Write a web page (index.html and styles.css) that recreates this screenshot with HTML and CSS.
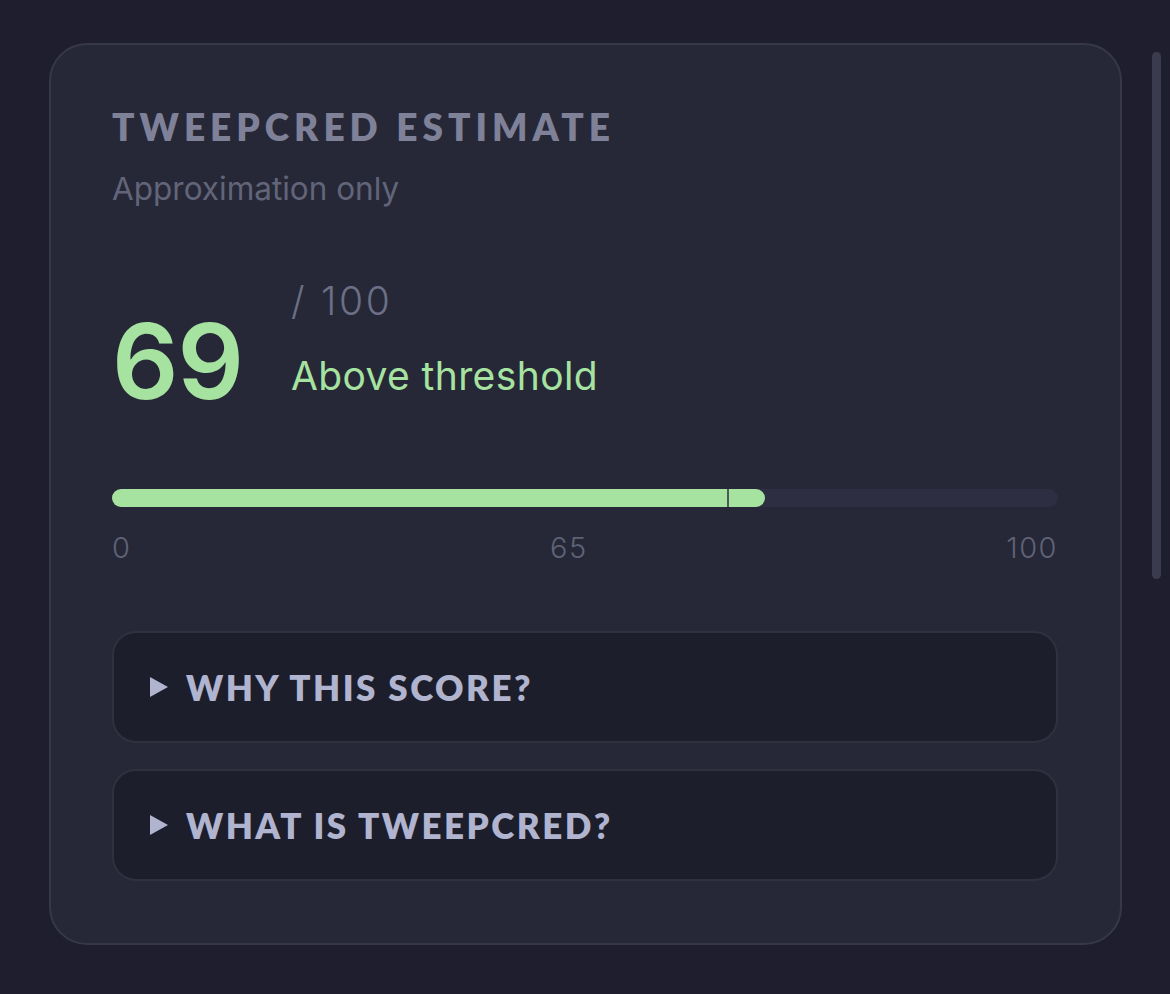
FILE: index.html
```html
<!DOCTYPE html>
<html>
<head>
<meta charset="utf-8">
<link rel="stylesheet" href="styles.css">
</head>
<body>
<div class="card">
  <div class="title">TWEEPCRED ESTIMATE</div>
  <div class="subtitle">Approximation only</div>
  <div class="score-row">
    <div class="score">69</div>
    <div class="score-side">
      <div class="out-of">/ 100</div>
      <div class="status">Above threshold</div>
    </div>
  </div>
  <div class="bar">
    <div class="bar-fill" style="width: 69%"></div>
    <div class="bar-marker" style="left: 65%"></div>
  </div>
  <div class="bar-labels">
    <span>0</span><span>65</span><span>100</span>
  </div>
  <details class="panel">
    <summary class="panel-summary"><span class="tri"></span>WHY THIS SCORE?</summary>
  </details>
  <details class="panel">
    <summary class="panel-summary"><span class="tri"></span>WHAT IS TWEEPCRED?</summary>
  </details>
</div>
<div class="scrollbar"><div class="thumb"></div></div>
</body>
</html>
```
FILE: styles.css
```css
html, body {
  margin: 0;
  background: #1e1e2e;
}
body {
  padding: 43px 49px;
  font-family: Inter, "Noto Sans", sans-serif;
  overflow: hidden;
  height: 994px;
  box-sizing: border-box;
}
.card {
  width: 1073px;
  box-sizing: border-box;
  background: #262837;
  border: 2px solid #363848;
  border-radius: 38px;
  padding: 60px 62px 62px 61px;
}
.title {
  font-family: Lato, sans-serif;
  font-weight: 800;
  font-size: 37px;
  line-height: 40px;
  letter-spacing: 0.135em;
  color: #7f8198;
  margin-top: 2px;
}
.subtitle {
  font-size: 31.5px;
  line-height: 38px;
  color: #626579;
  margin-top: 23px;
}
.score-row {
  display: flex;
  align-items: flex-start;
  gap: 48px;
  margin-top: 73px;
}
.score {
  font-size: 104px;
  font-weight: 600;
  line-height: 104px;
  color: #a6e3a1;
  letter-spacing: -0.01em;
  margin-top: 28px;
}
.score-side {
  display: flex;
  flex-direction: column;
  gap: 31px;
}
.out-of {
  font-size: 39px;
  font-weight: 300;
  line-height: 40px;
  letter-spacing: 0.07em;
  color: #6c6f85;
}
.status {
  font-size: 39px;
  line-height: 48px;
  letter-spacing: 0.01em;
  color: #a6e3a1;
}
.bar {
  position: relative;
  height: 18px;
  background: #2d2e42;
  border-radius: 9px;
  margin-top: 76px;
}
.bar-fill {
  height: 100%;
  background: #a6e3a1;
  border-radius: 9px;
}
.bar-marker {
  position: absolute;
  top: 0;
  bottom: 0;
  width: 2px;
  background: #4c5a58;
}
.bar-labels {
  display: flex;
  justify-content: space-between;
  font-size: 29px;
  font-weight: 300;
  line-height: 34px;
  letter-spacing: 1.5px;
  color: #5f6277;
  margin-top: 24px;
}
.panel {
  margin-top: 26px;
  background: #1d1e2c;
  border: 2px solid #30313f;
  border-radius: 24px;
}
.bar-labels + .panel {
  margin-top: 66px;
}
.panel-summary {
  list-style: none;
  display: flex;
  align-items: center;
  height: 108px;
  padding-left: 36px;
  font-family: Lato, sans-serif;
  font-weight: 800;
  font-size: 35px;
  letter-spacing: 0.07em;
  color: #b0b4cf;
}
.panel-summary::-webkit-details-marker {
  display: none;
}
.tri {
  width: 0;
  height: 0;
  border-top: 10.5px solid transparent;
  border-bottom: 10.5px solid transparent;
  border-left: 18px solid #b0b4cf;
  margin-right: 18px;
}
.scrollbar {
  position: fixed;
  top: 52px;
  left: 1152px;
  width: 9px;
  height: 527px;
}
.thumb {
  width: 100%;
  height: 100%;
  background: #3b3b4e;
  border-radius: 5px;
}
```
